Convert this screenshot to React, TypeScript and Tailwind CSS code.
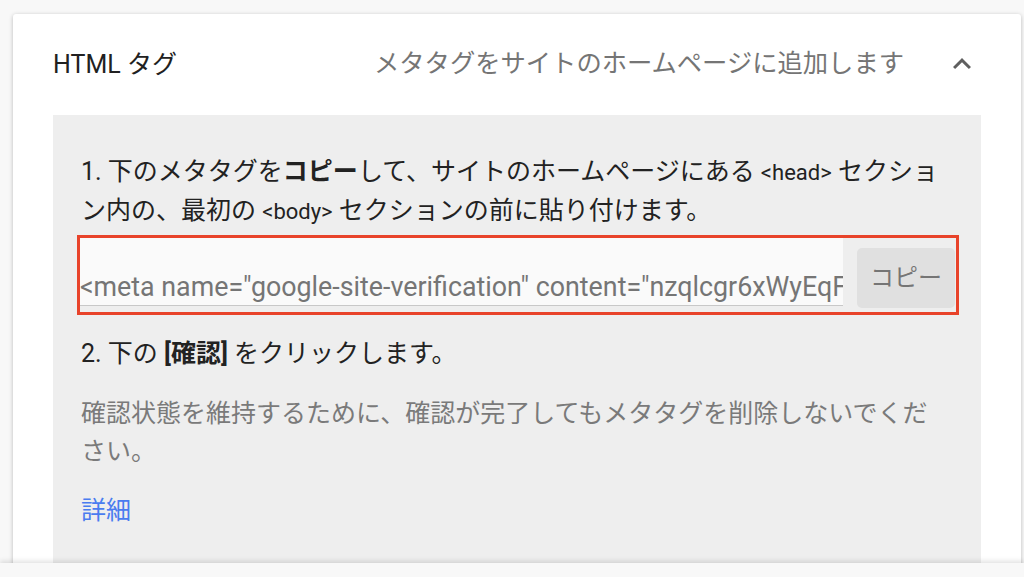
import React from "react";

const font = { fontFamily: '"Roboto", "Noto Sans CJK JP", sans-serif' };

export default function App() {
  return (
    <div
      className="relative w-[1024px] h-[577px] overflow-hidden bg-[#f8f8f8]"
      style={font}
    >
      <div className="pt-[14px] pl-[13px] pr-[3px]">
        <div className="bg-white rounded-[3px] shadow-[0_1px_4px_rgba(0,0,0,0.25)] px-[40px] h-[600px]">
          {/* Header */}
          <div className="flex items-center h-[101px] pb-[1px]">
            <div className="text-[25px] text-[#212121] leading-none">HTML タグ</div>
            <div className="flex-1" />
            <div className="text-[25.3px] text-[#757575] leading-none">
              メタタグをサイトのホームページに追加します
            </div>
            <svg
              viewBox="0 0 24 24"
              className="w-[36px] h-[36px] ml-[40px] mr-[1px] fill-[#5f5f5f]"
            >
              <path d="M12 8l-6 6 1.41 1.41L12 10.83l4.59 4.58L18 14z" />
            </svg>
          </div>
          {/* Gray panel */}
          <div className="bg-[#eeeeee] px-[28px] pt-[38px] h-[500px]">
            <div className="text-[25px] leading-[38px] text-[#222222] whitespace-nowrap">
              1. 下のメタタグを<b className="font-bold">コピー</b>して、サイトのホームページにある{" "}
              <span className="text-[22px]">&lt;head&gt;</span> セクショ
              <br />
              ン内の、最初の <span className="text-[22px]">&lt;body&gt;</span> セクションの前に貼り付けます。
            </div>
            <div className="mt-[7px] flex items-start h-[74px] outline-[3px] outline-solid outline-[#e8432a] ml-[-1px] mr-[-3px]">
              <div className="w-[763px] h-[68px] bg-[#fafafa] border-b border-[#c8c8c8] overflow-hidden flex items-end pb-[2px]">
                <span className="text-[26.8px] leading-[32px] text-[#757575] whitespace-nowrap">
                  &lt;meta name="google-site-verification" content="nzqlcgr6xWyEqF" /&gt;
                </span>
              </div>
              <div className="ml-[14px] mt-[10px] w-[98px] h-[60px] rounded-[5px] bg-[#e0e0e0] flex items-center justify-center text-[24px] text-[#757575]">
                コピー
              </div>
            </div>
            <div className="mt-[23px] text-[25px] leading-[38px] text-[#222222]">
              2. 下の <b className="font-bold">[確認]</b> をクリックします。
            </div>
            <div className="mt-[22px] text-[25px] leading-[38px] text-[#7a7a7a] whitespace-nowrap">
              確認状態を維持するために、確認が完了してもメタタグを削除しないでくだ
              <br />
              さい。
            </div>
            <div className="mt-[21px] text-[25px] leading-[38px] text-[#4a7cf0]">詳細</div>
          </div>
        </div>
      </div>
      <div className="absolute left-0 right-0 bottom-0 h-[14px] bg-[#f8f8f8] shadow-[0_-2px_5px_rgba(0,0,0,0.12)]" />
    </div>
  );
}
